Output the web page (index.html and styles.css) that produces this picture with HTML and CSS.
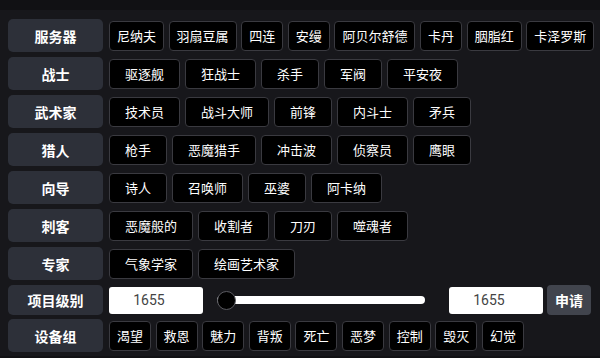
FILE: index.html
```
<!DOCTYPE html>
<html lang="zh-CN">
	<head>
		<meta charset="utf-8">
		<title>设备筛选</title>
		<link rel="stylesheet" href="styles.css">
	</head>
	<body>
		<div class="panel">
			<div class="row">
				<div class="label">服务器</div>
				<div class="options compact">
					<button>尼纳夫</button>
					<button>羽扇豆属</button>
					<button>四连</button>
					<button>安缦</button>
					<button>阿贝尔舒德</button>
					<button>卡丹</button>
					<button>胭脂红</button>
					<button>卡泽罗斯</button>
				</div>
			</div>
			<div class="row">
				<div class="label">战士</div>
				<div class="options">
					<button>驱逐舰</button>
					<button>狂战士</button>
					<button>杀手</button>
					<button>军阀</button>
					<button>平安夜</button>
				</div>
			</div>
			<div class="row">
				<div class="label">武术家</div>
				<div class="options">
					<button>技术员</button>
					<button>战斗大师</button>
					<button>前锋</button>
					<button>内斗士</button>
					<button>矛兵</button>
				</div>
			</div>
			<div class="row">
				<div class="label">猎人</div>
				<div class="options">
					<button>枪手</button>
					<button>恶魔猎手</button>
					<button>冲击波</button>
					<button>侦察员</button>
					<button>鹰眼</button>
				</div>
			</div>
			<div class="row">
				<div class="label">向导</div>
				<div class="options">
					<button>诗人</button>
					<button>召唤师</button>
					<button>巫婆</button>
					<button>阿卡纳</button>
				</div>
			</div>
			<div class="row">
				<div class="label">刺客</div>
				<div class="options">
					<button>恶魔般的</button>
					<button>收割者</button>
					<button>刀刃</button>
					<button>噬魂者</button>
				</div>
			</div>
			<div class="row">
				<div class="label">专家</div>
				<div class="options">
					<button>气象学家</button>
					<button>绘画艺术家</button>
				</div>
			</div>
			<div class="row level">
				<div class="label">项目级别</div>
				<div class="level-controls">
					<input class="level-input" type="text" value="1655">
					<input class="level-range" type="range" min="1655" max="1660" value="1655">
					<input class="level-input second" type="text" value="1655">
					<button class="apply">申请</button>
				</div>
			</div>
			<div class="row">
				<div class="label">设备组</div>
				<div class="options compact">
					<button>渴望</button>
					<button>救恩</button>
					<button>魅力</button>
					<button>背叛</button>
					<button>死亡</button>
					<button>恶梦</button>
					<button>控制</button>
					<button>毁灭</button>
					<button>幻觉</button>
				</div>
			</div>
		</div>
	</body>
</html>
```

FILE: styles.css
```
html
{
	font-family: "Noto Sans CJK SC", "Noto Sans", sans-serif;
}

body
{
	margin: 0;
	background: #111114;
}

.panel
{
	margin-top: 10px;
	padding: 9px 0 4px 8px;
	background: #17171b;
	display: flex;
	flex-direction: column;
	gap: 5px;
}

.row
{
	display: flex;
	align-items: center;
	height: 33px;
}

.row.level
{
	height: 30px;
	margin-bottom: -1px;
}

.label
{
	flex: none;
	width: 95px;
	height: 100%;
	display: flex;
	align-items: center;
	justify-content: center;
	background: #2d3039;
	border-radius: 5px;
	color: #fff;
	font-size: 14px;
	font-weight: bold;
}

.options
{
	display: flex;
	gap: 5px;
	margin-left: 6px;
}

.options button
{
	height: 30px;
	padding: 0 15px;
	background: #000;
	border: 1px solid #3a3a40;
	border-radius: 4px;
	color: #fff;
	font-family: inherit;
	font-size: 13px;
	line-height: 1;
	white-space: nowrap;
}

.options.compact
{
	gap: 4.6px;
}

.options.compact button
{
	padding: 0 7px;
}

.level-controls
{
	display: flex;
	align-items: center;
	margin-left: 6px;
	height: 100%;
}

.level-input
{
	box-sizing: border-box;
	width: 94px;
	height: 27px;
	padding: 0 14px 0 0;
	border: none;
	border-radius: 3px;
	background: #fff;
	color: #444;
	font-family: "Roboto", sans-serif;
	font-size: 14px;
	text-align: center;
	outline: none;
}

.level-range
{
	-webkit-appearance: none;
	appearance: none;
	width: 208px;
	height: 20px;
	margin: 0 24px 0 14px;
	background: transparent;
}

.level-range::-webkit-slider-runnable-track
{
	height: 8px;
	background: #fff;
	border-radius: 4px;
}

.level-range::-webkit-slider-thumb
{
	-webkit-appearance: none;
	box-sizing: border-box;
	width: 19px;
	height: 19px;
	margin-top: -5.5px;
	background: #000;
	border: 1px solid #5a5a60;
	border-radius: 50%;
}

.apply
{
	height: 30px;
	margin-left: 4px;
	padding: 0 8px;
	background: #41444d;
	border: none;
	border-radius: 4px;
	color: #fff;
	font-family: inherit;
	font-size: 14px;
	font-weight: 600;
}
```
